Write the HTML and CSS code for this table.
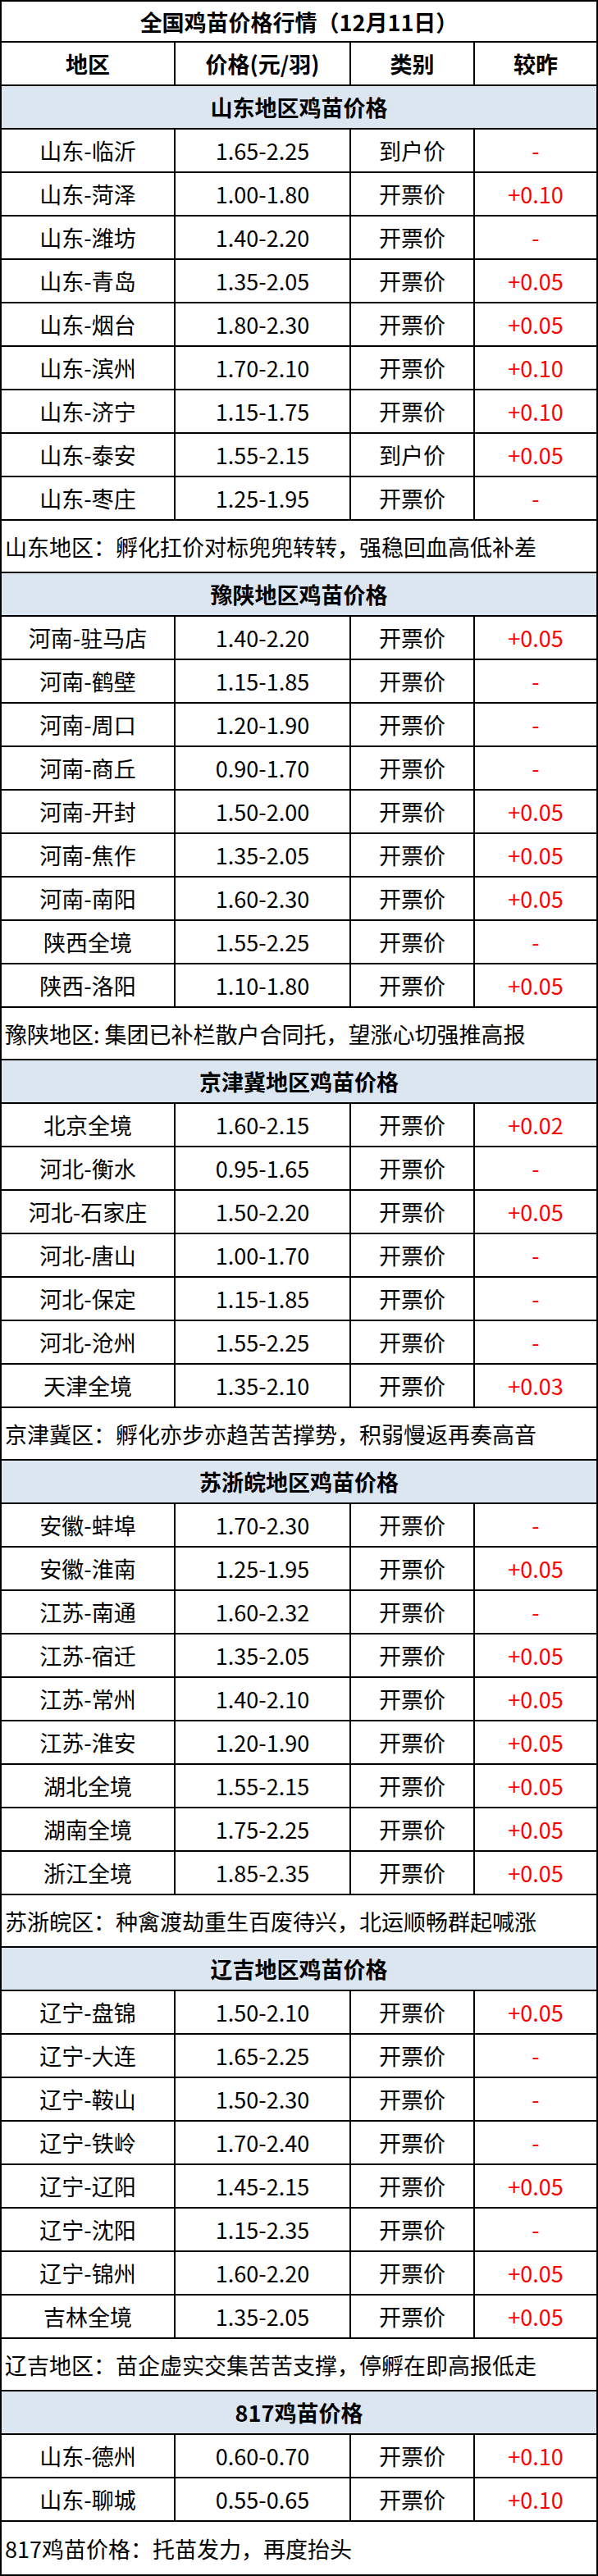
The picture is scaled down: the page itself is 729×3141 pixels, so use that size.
FILE: index.html
```html
<!DOCTYPE html>
<html lang="zh-CN">
<head>
<meta charset="utf-8">
<title>全国鸡苗价格行情</title>
<link rel="stylesheet" href="styles.css">
</head>
<body>
<div class="sheet">
  <div class="band title">全国鸡苗价格行情（12月11日）</div>
  <div class="row head"><div>地区</div><div>价格(元/羽)</div><div>类别</div><div>较昨</div></div>

  <div class="band section">山东地区鸡苗价格</div>
  <div class="row"><div>山东-临沂</div><div>1.65-2.25</div><div>到户价</div><div class="chg">-</div></div>
  <div class="row"><div>山东-菏泽</div><div>1.00-1.80</div><div>开票价</div><div class="chg">+0.10</div></div>
  <div class="row"><div>山东-潍坊</div><div>1.40-2.20</div><div>开票价</div><div class="chg">-</div></div>
  <div class="row"><div>山东-青岛</div><div>1.35-2.05</div><div>开票价</div><div class="chg">+0.05</div></div>
  <div class="row"><div>山东-烟台</div><div>1.80-2.30</div><div>开票价</div><div class="chg">+0.05</div></div>
  <div class="row"><div>山东-滨州</div><div>1.70-2.10</div><div>开票价</div><div class="chg">+0.10</div></div>
  <div class="row"><div>山东-济宁</div><div>1.15-1.75</div><div>开票价</div><div class="chg">+0.10</div></div>
  <div class="row"><div>山东-泰安</div><div>1.55-2.15</div><div>到户价</div><div class="chg">+0.05</div></div>
  <div class="row"><div>山东-枣庄</div><div>1.25-1.95</div><div>开票价</div><div class="chg">-</div></div>
  <div class="band note">山东地区：孵化扛价对标兜兜转转，强稳回血高低补差</div>

  <div class="band section">豫陕地区鸡苗价格</div>
  <div class="row"><div>河南-驻马店</div><div>1.40-2.20</div><div>开票价</div><div class="chg">+0.05</div></div>
  <div class="row"><div>河南-鹤壁</div><div>1.15-1.85</div><div>开票价</div><div class="chg">-</div></div>
  <div class="row"><div>河南-周口</div><div>1.20-1.90</div><div>开票价</div><div class="chg">-</div></div>
  <div class="row"><div>河南-商丘</div><div>0.90-1.70</div><div>开票价</div><div class="chg">-</div></div>
  <div class="row"><div>河南-开封</div><div>1.50-2.00</div><div>开票价</div><div class="chg">+0.05</div></div>
  <div class="row"><div>河南-焦作</div><div>1.35-2.05</div><div>开票价</div><div class="chg">+0.05</div></div>
  <div class="row"><div>河南-南阳</div><div>1.60-2.30</div><div>开票价</div><div class="chg">+0.05</div></div>
  <div class="row"><div>陕西全境</div><div>1.55-2.25</div><div>开票价</div><div class="chg">-</div></div>
  <div class="row"><div>陕西-洛阳</div><div>1.10-1.80</div><div>开票价</div><div class="chg">+0.05</div></div>
  <div class="band note">豫陕地区: 集团已补栏散户合同托，望涨心切强推高报</div>

  <div class="band section">京津冀地区鸡苗价格</div>
  <div class="row"><div>北京全境</div><div>1.60-2.15</div><div>开票价</div><div class="chg">+0.02</div></div>
  <div class="row"><div>河北-衡水</div><div>0.95-1.65</div><div>开票价</div><div class="chg">-</div></div>
  <div class="row"><div>河北-石家庄</div><div>1.50-2.20</div><div>开票价</div><div class="chg">+0.05</div></div>
  <div class="row"><div>河北-唐山</div><div>1.00-1.70</div><div>开票价</div><div class="chg">-</div></div>
  <div class="row"><div>河北-保定</div><div>1.15-1.85</div><div>开票价</div><div class="chg">-</div></div>
  <div class="row"><div>河北-沧州</div><div>1.55-2.25</div><div>开票价</div><div class="chg">-</div></div>
  <div class="row"><div>天津全境</div><div>1.35-2.10</div><div>开票价</div><div class="chg">+0.03</div></div>
  <div class="band note">京津冀区：孵化亦步亦趋苦苦撑势，积弱慢返再奏高音</div>

  <div class="band section">苏浙皖地区鸡苗价格</div>
  <div class="row"><div>安徽-蚌埠</div><div>1.70-2.30</div><div>开票价</div><div class="chg">-</div></div>
  <div class="row"><div>安徽-淮南</div><div>1.25-1.95</div><div>开票价</div><div class="chg">+0.05</div></div>
  <div class="row"><div>江苏-南通</div><div>1.60-2.32</div><div>开票价</div><div class="chg">-</div></div>
  <div class="row"><div>江苏-宿迁</div><div>1.35-2.05</div><div>开票价</div><div class="chg">+0.05</div></div>
  <div class="row"><div>江苏-常州</div><div>1.40-2.10</div><div>开票价</div><div class="chg">+0.05</div></div>
  <div class="row"><div>江苏-淮安</div><div>1.20-1.90</div><div>开票价</div><div class="chg">+0.05</div></div>
  <div class="row"><div>湖北全境</div><div>1.55-2.15</div><div>开票价</div><div class="chg">+0.05</div></div>
  <div class="row"><div>湖南全境</div><div>1.75-2.25</div><div>开票价</div><div class="chg">+0.05</div></div>
  <div class="row"><div>浙江全境</div><div>1.85-2.35</div><div>开票价</div><div class="chg">+0.05</div></div>
  <div class="band note">苏浙皖区：种禽渡劫重生百废待兴，北运顺畅群起喊涨</div>

  <div class="band section">辽吉地区鸡苗价格</div>
  <div class="row"><div>辽宁-盘锦</div><div>1.50-2.10</div><div>开票价</div><div class="chg">+0.05</div></div>
  <div class="row"><div>辽宁-大连</div><div>1.65-2.25</div><div>开票价</div><div class="chg">-</div></div>
  <div class="row"><div>辽宁-鞍山</div><div>1.50-2.30</div><div>开票价</div><div class="chg">-</div></div>
  <div class="row"><div>辽宁-铁岭</div><div>1.70-2.40</div><div>开票价</div><div class="chg">-</div></div>
  <div class="row"><div>辽宁-辽阳</div><div>1.45-2.15</div><div>开票价</div><div class="chg">+0.05</div></div>
  <div class="row"><div>辽宁-沈阳</div><div>1.15-2.35</div><div>开票价</div><div class="chg">-</div></div>
  <div class="row"><div>辽宁-锦州</div><div>1.60-2.20</div><div>开票价</div><div class="chg">+0.05</div></div>
  <div class="row"><div>吉林全境</div><div>1.35-2.05</div><div>开票价</div><div class="chg">+0.05</div></div>
  <div class="band note">辽吉地区：苗企虚实交集苦苦支撑，停孵在即高报低走</div>

  <div class="band section">817鸡苗价格</div>
  <div class="row"><div>山东-德州</div><div>0.60-0.70</div><div>开票价</div><div class="chg">+0.10</div></div>
  <div class="row"><div>山东-聊城</div><div>0.55-0.65</div><div>开票价</div><div class="chg">+0.10</div></div>
  <div class="band note last">817鸡苗价格：托苗发力，再度抬头</div>
</div>
</body>
</html>
```

FILE: styles.css
```css
* {
  box-sizing: border-box;
}

html,
body {
  margin: 0;
  padding: 0;
  background: #ffffff;
}

body {
  font-family: "Noto Sans CJK SC", "Microsoft YaHei", sans-serif;
  font-size: 27px;
  line-height: 1.2;
  color: #000000;
}

.sheet {
  width: 729px;
  border-top: 2px solid #000000;
  border-left: 2px solid #000000;
}

.band {
  height: 53px;
  border-right: 2px solid #000000;
  border-bottom: 2px solid #000000;
  display: flex;
  align-items: center;
  justify-content: center;
  padding-top: 2px;
  white-space: nowrap;
}

.title {
  height: 50px;
  font-weight: 700;
}

.section {
  background: #dce6f1;
  font-weight: 700;
}

.note {
  height: 64px;
  justify-content: flex-start;
  padding-left: 4px;
}

.note.last {
  height: 66px;
}

.row {
  display: grid;
  grid-template-columns: 212px 214px 151px 150px;
  height: 53px;
}

.row > div {
  border-right: 2px solid #000000;
  border-bottom: 2px solid #000000;
  display: flex;
  align-items: center;
  justify-content: center;
  padding-top: 2px;
  white-space: nowrap;
}

.head > div {
  font-weight: 700;
}

.chg {
  color: #ff0000;
}
```
